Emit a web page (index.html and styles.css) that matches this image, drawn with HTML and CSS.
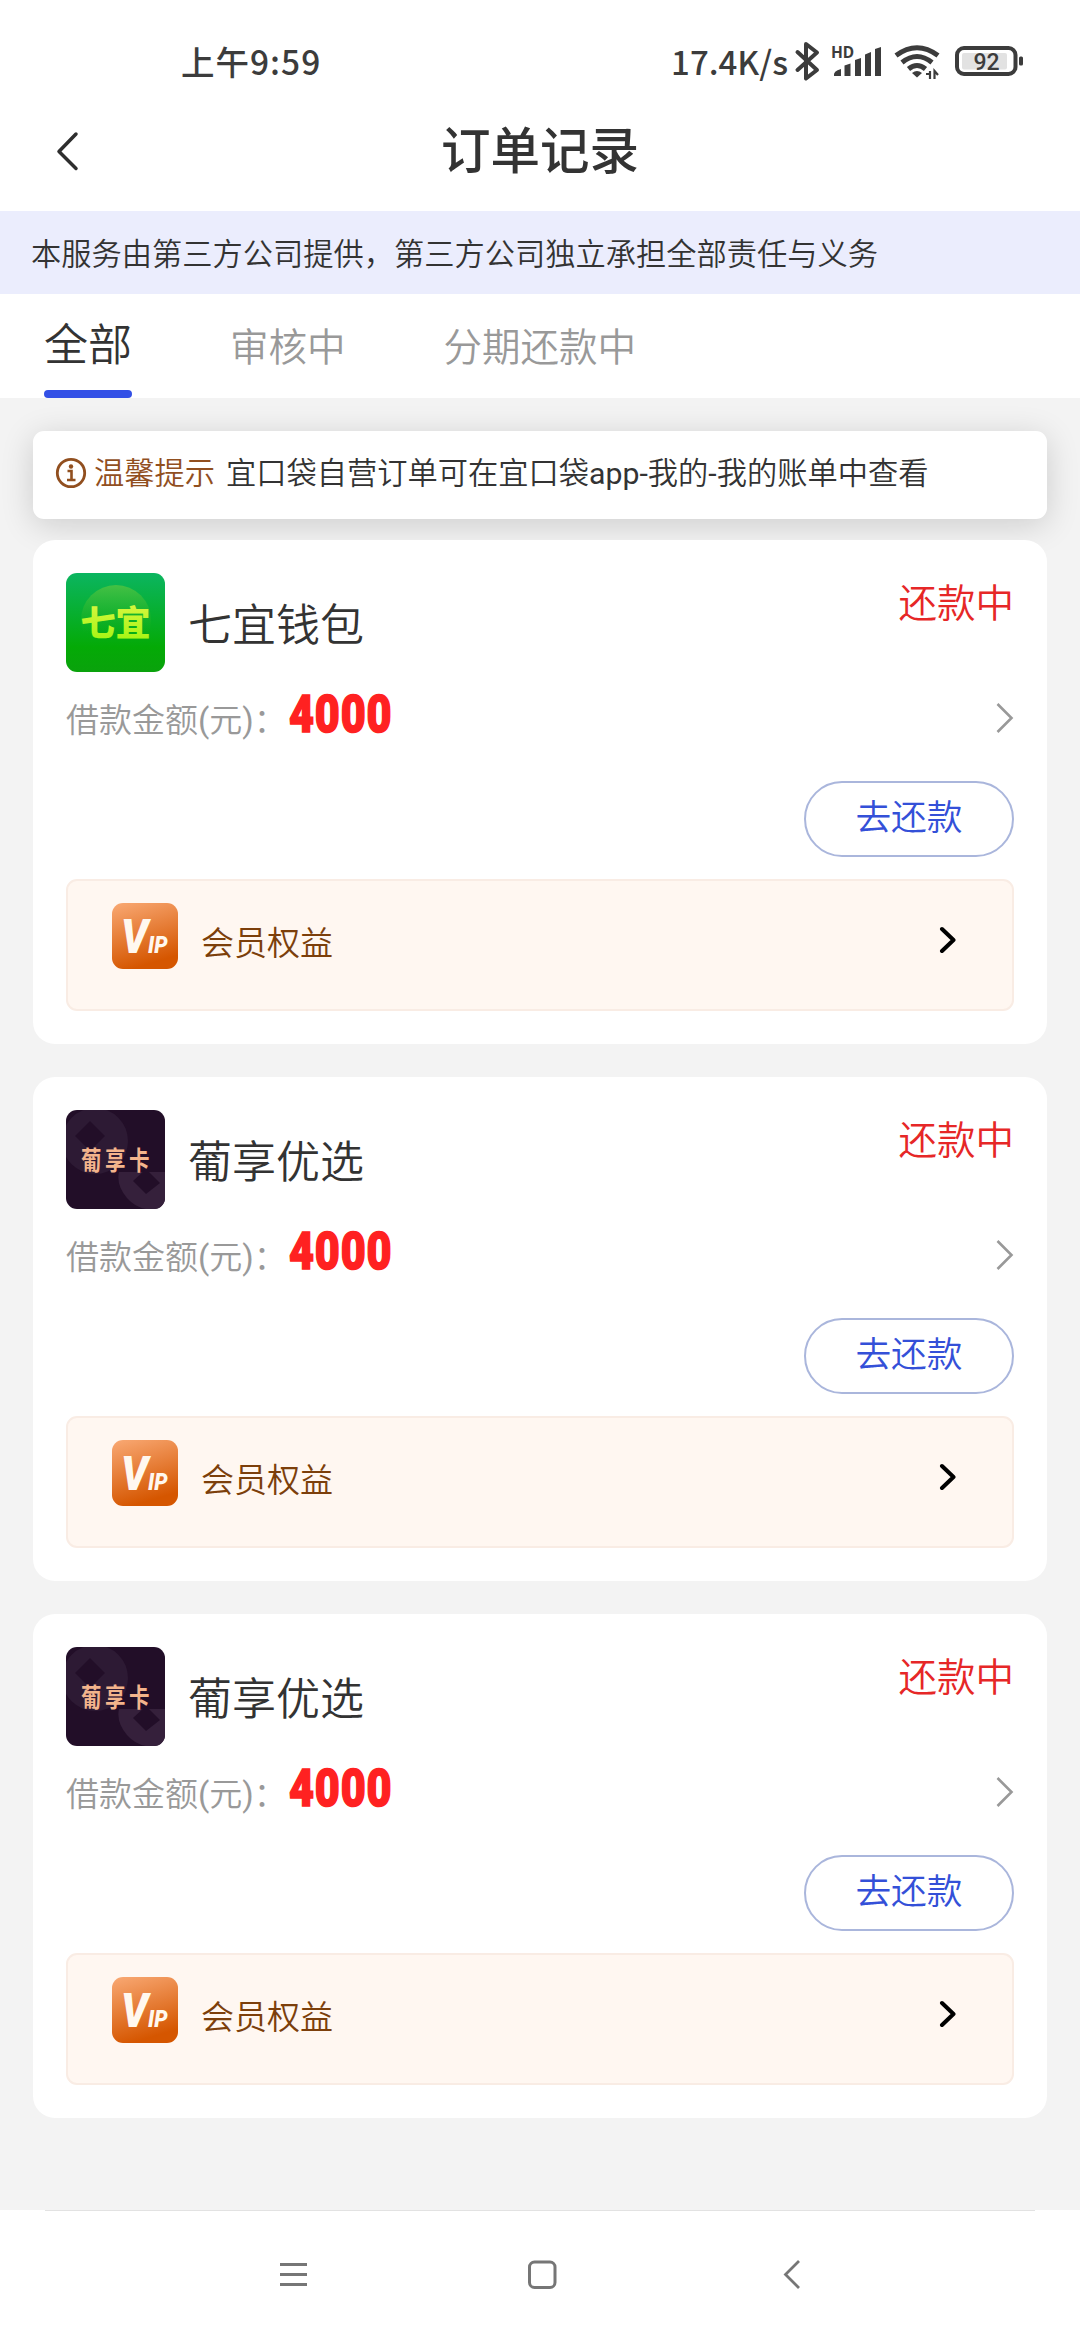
FILE: index.html
```html
<!DOCTYPE html>
<html lang="zh-CN">
<head>
<meta charset="utf-8">
<title>订单记录</title>
<link rel="stylesheet" href="styles.css">
</head>
<body>
<svg class="defs" width="0" height="0" aria-hidden="true">
  <defs>
    <linearGradient id="green" x1="0" y1="0" x2="0" y2="1"><stop offset="0" stop-color="#0bb560"/><stop offset=".75" stop-color="#04aa06"/><stop offset="1" stop-color="#0aa20c"/></linearGradient>
    <linearGradient id="glow" x1="0" y1="0" x2="0" y2="1"><stop offset="0" stop-color="#45c144"/><stop offset=".7" stop-color="#1fb01d" stop-opacity="0"/></linearGradient>
    <linearGradient id="lime" x1="0" y1="0" x2="0" y2="1"><stop offset="0" stop-color="#e4f64a"/><stop offset="1" stop-color="#9df50c"/></linearGradient>
    <linearGradient id="orange" x1="0" y1="0" x2=".3" y2="1"><stop offset="0" stop-color="#f9a974"/><stop offset="1" stop-color="#d55600"/></linearGradient>
    <symbol id="grape" viewBox="0 0 99 99">
      <rect width="99" height="99" fill="#220e28"/>
      <circle cx="29" cy="31" r="33" fill="#2d1a34"/><path d="M24 11 39 26 24 41 9 26Z" fill="#220e28"/>
      <path d="M99 98Q75 104 61 88 50 75 53 62H99Z" fill="#35203b"/><path d="M80 59 94 73 80 84 67 71Z" fill="#220e28"/>
    </symbol>
    <symbol id="vip" viewBox="0 0 66 66">
      <rect width="66" height="66" rx="11" fill="url(#orange)"/>
    </symbol>
    <symbol id="more" viewBox="0 0 18 30"><path d="M1.500 1 15.500 15 1.500 29" fill="none" stroke="#999" stroke-width="2.600"/></symbol>
    <symbol id="go" viewBox="0 0 18 30"><path d="M4 4 15.500 15 4 26" fill="none" stroke="#000" stroke-width="4" stroke-linecap="round" stroke-linejoin="round"/></symbol>
  </defs>
</svg>

<header class="status">
  <span class="clock">上午9:59</span>
  <span class="speed">17.4K/s</span>
  <svg class="signals" width="232" height="42" viewBox="793 42 232 42" fill="none" stroke="#3c3c3c">
    <path d="M797.500 53 817 71 806 79.500V45L817 53.500 797.500 71" stroke-width="4" stroke-linejoin="round" stroke-linecap="round"/>
    <g fill="#3c3c3c" stroke="none"><path d="M834 77Q833 72 841 70V77ZM844.500 66.500 850.500 64.500V77H844.500ZM855 61 861 59V77H855ZM865 55.500 871 53V77H865ZM875 50 881 48V77H875Z"/></g>
    <g stroke-width="5"><path d="M896 56.500Q917 41 938 56.500M902 63.500Q917 51.500 932 63.500M908.500 70Q917 63 925.500 70"/></g>
    <path d="M912 74Q917 70 922 74L917 78.500Z" fill="#3c3c3c" stroke="none"/>
    <path d="M926 75H930V80M930 72V80M934.500 80V72L938 76" stroke-width="2.200"/>
    <rect x="957" y="49" width="58.500" height="26" rx="7" stroke-width="4"/>
    <rect x="962" y="54" width="45" height="16.500" rx="2" fill="#e2e2e2" stroke="none"/>
    <rect x="1019" y="57.500" width="4" height="9" rx="1.500" fill="#3c3c3c" stroke="none"/>
    <text class="hd" x="831" y="58.500">HD</text>
    <text class="charge" x="986.500" y="71" text-anchor="middle">92</text>
  </svg>
</header>

<div class="titlebar">
  <svg class="back" width="30" height="42" viewBox="0 0 30 42"><path d="M24 4 7 21.500 24 38.500" fill="none" stroke="#2e2e2e" stroke-width="3.500" stroke-linecap="round" stroke-linejoin="round"/></svg>
  <h1>订单记录</h1>
</div>

<div class="disclaimer">本服务由第三方公司提供，第三方公司独立承担全部责任与义务</div>

<nav class="tabs">
  <a class="tab active">全部</a>
  <a class="tab">审核中</a>
  <a class="tab">分期还款中</a>
</nav>

<main class="content">
  <div class="tip">
    <svg width="32" height="32" viewBox="0 0 32 32"><circle cx="16" cy="16" r="13.700" fill="none" stroke="#914f1f" stroke-width="2.800"/><circle cx="16" cy="9.500" r="2.200" fill="#914f1f"/><path d="M12.500 14H16.500V22.500M12 23H20.500" fill="none" stroke="#914f1f" stroke-width="2.600"/></svg>
    <b>温馨提示</b>
    <span>宜口袋自营订单可在宜口袋<i class="latin">app-</i>我的<i class="latin">-</i>我的账单中查看</span>
  </div>

  <section class="card">
    <div class="head">
      <svg class="logo" width="99" height="99" viewBox="0 0 99 99"><rect width="99" height="99" fill="url(#green)"/><circle cx="50" cy="47" r="35" fill="url(#glow)"/><text class="qiyi" x="49.500" y="63" text-anchor="middle">七宜</text></svg>
      <h2>七宜钱包</h2><span class="state">还款中</span>
    </div>
    <div class="amount"><span class="label">借款金额<i class="latin">(</i>元<i class="latin">)</i>：</span><strong>4000</strong><svg width="18" height="30"><use href="#more"/></svg></div>
    <div class="actions"><button class="repay">去还款</button></div>
    <div class="member"><svg class="badge" width="66" height="66" viewBox="0 0 66 66"><use href="#vip"/><text class="vip" transform="translate(9 50) scale(.88 1)">V<tspan class="ip">IP</tspan></text></svg><span>会员权益</span><svg width="18" height="30"><use href="#go"/></svg></div>
  </section>

  <section class="card">
    <div class="head">
      <svg class="logo" width="99" height="99" viewBox="0 0 99 99"><use href="#grape"/><text class="puxiang" transform="translate(15 60) scale(1 1.25)">葡享卡</text></svg>
      <h2>葡享优选</h2><span class="state">还款中</span>
    </div>
    <div class="amount"><span class="label">借款金额<i class="latin">(</i>元<i class="latin">)</i>：</span><strong>4000</strong><svg width="18" height="30"><use href="#more"/></svg></div>
    <div class="actions"><button class="repay">去还款</button></div>
    <div class="member"><svg class="badge" width="66" height="66" viewBox="0 0 66 66"><use href="#vip"/><text class="vip" transform="translate(9 50) scale(.88 1)">V<tspan class="ip">IP</tspan></text></svg><span>会员权益</span><svg width="18" height="30"><use href="#go"/></svg></div>
  </section>

  <section class="card">
    <div class="head">
      <svg class="logo" width="99" height="99" viewBox="0 0 99 99"><use href="#grape"/><text class="puxiang" transform="translate(15 60) scale(1 1.25)">葡享卡</text></svg>
      <h2>葡享优选</h2><span class="state">还款中</span>
    </div>
    <div class="amount"><span class="label">借款金额<i class="latin">(</i>元<i class="latin">)</i>：</span><strong>4000</strong><svg width="18" height="30"><use href="#more"/></svg></div>
    <div class="actions"><button class="repay">去还款</button></div>
    <div class="member"><svg class="badge" width="66" height="66" viewBox="0 0 66 66"><use href="#vip"/><text class="vip" transform="translate(9 50) scale(.88 1)">V<tspan class="ip">IP</tspan></text></svg><span>会员权益</span><svg width="18" height="30"><use href="#go"/></svg></div>
  </section>
</main>

<footer class="sysnav">
  <svg width="32" height="32" viewBox="0 0 32 32"><path d="M3 4.500H30M3 14.500H30M3 24.500H30" stroke="#767676" stroke-width="3"/></svg>
  <svg width="32" height="32" viewBox="0 0 32 32"><rect x="2.500" y="2" width="25.500" height="25.500" rx="5" fill="none" stroke="#767676" stroke-width="3"/></svg>
  <svg width="32" height="32" viewBox="0 0 32 32"><path d="M23 1 9.500 14.500 23 28" fill="none" stroke="#767676" stroke-width="2.800"/></svg>
</footer>
</body>
</html>
```
FILE: styles.css
```css
* { box-sizing: border-box; }
body {
  margin: 0;
  width: 1080px;
  height: 2340px;
  overflow: hidden;
  display: flex;
  flex-direction: column;
  background: #fff;
  color: #333;
  font-family: Roboto, "Noto Sans CJK SC", sans-serif;
  font-size: 30.25px;
  font-weight: 350;
}
svg { display: block; flex: none; }
.defs { position: absolute; }
h1, h2 { margin: 0; }
.latin { font-style: normal; font-weight: 400; }

.status {
  height: 124px;
  flex: none;
  display: flex;
  align-items: center;
  padding: 0 55px 0 181px;
  color: #3c3c3c;
  font-family: "Noto Sans CJK SC", sans-serif;
  font-weight: 500;
}
.clock { font-size: 33.5px; line-height: 42px; padding-bottom: 2px; letter-spacing: 1px; }
.speed { margin-left: auto; font-size: 33px; line-height: 42px; padding-bottom: 2px; white-space: nowrap; }
.signals { margin-left: 5px; }
.signals text { fill: #3c3c3c; stroke: none; }
.hd { font: 700 15.5px "Noto Sans", sans-serif; }
.charge { font: 500 23px Roboto, sans-serif; }

.titlebar {
  height: 87px;
  flex: none;
  display: grid;
  grid-template-columns: 1fr auto 1fr;
  align-items: start;
}
.back { margin: 6px 0 0 52px; }
h1 { margin-top: 3px; font-size: 49.5px; line-height: 50px; font-weight: 500; }

.disclaimer {
  height: 83px;
  flex: none;
  padding-left: 31px;
  background: #ebedfd;
  line-height: 87px;
}

.tabs { height: 104px; flex: none; display: flex; padding-left: 44px; }
.tab { font-size: 38.5px; line-height: 108px; color: #999; margin-right: 98px; }
.tab.active {
  display: flex;
  flex-direction: column;
  justify-content: space-between;
  font-size: 44px;
  line-height: 96px;
  height: 104px;
  padding-top: 4px;
  color: #333;
}
.tab.active::after {
  content: "";
  height: 8px;
  margin-top: -4px;
  border-radius: 4px;
  background: #3350e6;
}

.content {
  height: 1812px;
  flex: none;
  display: flex;
  flex-direction: column;
  gap: 33px;
  padding: 33px 33px 0;
  background: #f3f3f3;
}
.tip {
  height: 88px;
  flex: none;
  display: flex;
  padding: 0 22px;
  background: #fff;
  border-radius: 11px;
  box-shadow: 0 6px 33px rgba(0, 0, 0, .16);
  line-height: 85px;
  margin-bottom: -12px;
  white-space: nowrap;
}
.tip svg { margin: 26px 7px 0 0; }
.tip b { font-weight: 350; color: #914f1f; margin-right: 11px; }

.card {
  height: 504px;
  flex: none;
  padding: 33px;
  background: #fff;
  border-radius: 22px;
  position: relative;
}
.head { display: flex; height: 99px; }
.logo { border-radius: 11px; }
h2 { margin-left: 23px; font-size: 44px; line-height: 107px; font-weight: 350; }
.state { margin-left: auto; font-size: 38.5px; line-height: 62px; color: #e62727; }
.qiyi { font: 900 35px "Noto Sans CJK SC", sans-serif; fill: url(#lime); }
.puxiang { font: 700 20.5px "Noto Sans CJK SC", sans-serif; fill: #f3b48c; letter-spacing: 3.5px; }

.amount { display: flex; align-items: center; height: 92px; }
.label { font-size: 33px; color: #999; white-space: nowrap; }
.amount strong {
  margin: 0 0 7px 2px;
  font: 900 52px/60px Roboto, sans-serif;
  color: #ff2121;
  letter-spacing: 1px;
  -webkit-text-stroke: 1.6px #ff2121;
  transform: scaleX(.83);
  transform-origin: 0 50%;
}
.amount svg { margin-left: auto; }

.actions { display: flex; justify-content: flex-end; padding-top: 17px; height: 115px; }
.repay {
  width: 210px;
  height: 76px;
  padding: 0 0 9px;
  border: 2px solid #aab6dc;
  border-radius: 38px;
  background: #fff;
  color: #3450d8;
  font: inherit;
  font-size: 35.75px;
}

.member {
  height: 132px;
  display: flex;
  align-items: flex-start;
  padding: 22px 56px 0 44px;
  border: 2px solid #f9ece4;
  border-radius: 11px;
  background: #fff7f1;
}
.member span { margin-left: 23px; font-size: 33px; line-height: 82px; color: #7c3f0b; }
.member > svg:last-child { margin: 22px 0 0 auto; }
.vip { font: italic 900 48px Roboto, sans-serif; fill: #fff8ef; }
.ip { font-size: 24px; }

.sysnav {
  height: 130px;
  flex: none;
  display: flex;
  justify-content: space-between;
  padding: 50px 272px 0 277px;
  background: linear-gradient(#e2e2e2, #e2e2e2) center top / 990px 1px no-repeat #fff;
}
```
